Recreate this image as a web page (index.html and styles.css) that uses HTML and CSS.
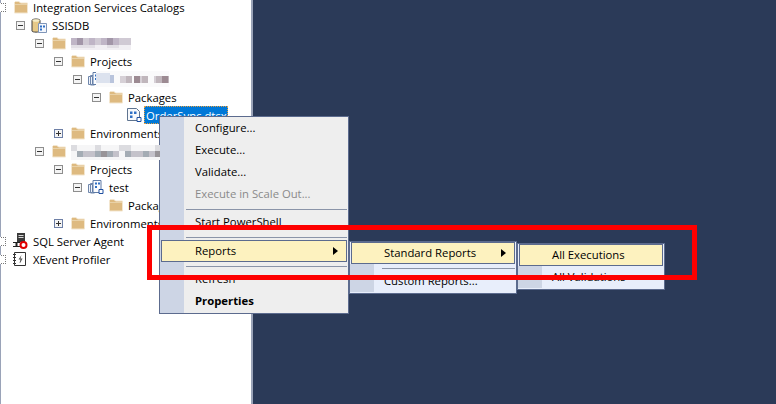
FILE: index.html
```html
<!DOCTYPE html>
<html lang="en">
<head>
<meta charset="utf-8">
<title>Object Explorer</title>
<link rel="stylesheet" href="styles.css">
</head>
<body>
<svg class="defs" width="0" height="0" aria-hidden="true">
  <defs>
    <symbol id="folder" viewBox="0 0 16 16">
      <path d="M2.500 14V3.500L3.500 2.500h3.500l1.500 1.500h7v10z" fill="#deba80" stroke="#f3e6cf"/>
      <path d="M3 5.500h12" stroke="#e9d2a8"/>
    </symbol>
    <symbol id="db" viewBox="0 0 16 16">
      <path d="M1 3.500C1 1.500 9 1.500 9 3.500V14C9 15.500 1 15.500 1 14z" fill="#e6c988" stroke="#3f3f3f"/>
      <ellipse cx="5" cy="3.500" rx="3.500" ry="1.300" fill="#f6eec8"/>
      <path d="M7.500 6.500h8v9h-8z" fill="#f4f7fc" stroke="#7f95b8"/>
      <path d="M9 8.500h2v2H9zM12 8.500h2v2h-2zM9 11.500h2v2H9z" fill="#2f6fc4"/>
    </symbol>
    <symbol id="project" viewBox="0 0 16 16">
      <path d="M.5 5.500h4v8h-4zM2.500 4.500h4v9.500h-4z" fill="#eef2f9" stroke="#6f86ab"/>
      <path d="M5 1.500h8v12H5z" fill="#fbfcfe" stroke="#5f7ba6"/>
      <path d="M7 3.500h2v2H7zM10 3.500h2v2h-2zM7 7h2v2H7z" fill="#2f6fc4"/>
      <path d="M11 10.500h4v4h-4z" fill="#fff" stroke="#1f4fa0"/>
    </symbol>
    <symbol id="package" viewBox="0 0 16 16">
      <path d="M1.500 1.500h9l3 3v9h-12z" fill="#f7f9fc" stroke="#5f7490"/>
      <path d="M4 4.500h2.500V7H4zM8 4.500h2.500V7H8zM4 8.500h2.500V11H4z" fill="#2f6fc4"/>
      <path d="M11 10.500h4v4h-4z" fill="#fff" stroke="#1f4fa0"/>
    </symbol>
    <symbol id="agent" viewBox="0 0 16 16">
      <path d="M5 0h8v9H5z" fill="#3a3a3a"/>
      <path d="M6.500 2h5v1h-5zM6.500 4h5v1h-5z" fill="#d8d8d8"/>
      <path d="M1 9h7v1H5.500v3H8v1H1v-1h2.500v-3H1z" fill="#222"/>
      <circle cx="11.500" cy="12" r="3" fill="#fff" stroke="#e00000" stroke-width="2"/>
    </symbol>
    <symbol id="xevent" viewBox="0 0 16 16">
      <path d="M2.500 1.500h11v13h-11z" fill="#fff" stroke="#333"/>
      <path d="M1 3.500h3M1 6.500h3M1 9.500h3M1 12.500h3" stroke="#333"/>
      <path d="M9.500 4L6.500 8.500h2L7.500 12l1-.5 2-4H8.500z" fill="#555"/>
    </symbol>
    <symbol id="mosaic-a" viewBox="0 0 60 12">
      <path d="M0 0h60v12H0z" fill="#f1eff3"/>
      <g fill="#bfb5c6"><path d="M0 0h12v7H0zM18 0h6v7h-6zM30 0h18v7H30z"/></g>
      <g fill="#a296a8"><path d="M6 0h6v7H6zM36 0h6v7h-6z"/></g>
      <g fill="#d0cad4"><path d="M12 0h6v7h-6zM24 0h6v7h-6zM48 0h12v7H48z"/></g>
      <path d="M0 7h24v3H0zM36 7h12v3H36z" fill="#e2dfe5"/>
    </symbol>
    <symbol id="mosaic-b" viewBox="0 0 73 16">
      <path d="M0 0h73v16H0z" fill="#fafafb"/>
      <path d="M0 2h14v10H0z" fill="#dce2ee"/>
      <path d="M14 4h4v8h-4z" fill="#b9c4dc"/>
      <path d="M24 5h10v7H24zM40 5h6v7h-6zM58 5h8v7h-8z" fill="#d6d0d6"/>
      <path d="M30 5h6v7h-6zM46 5h6v7h-6zM60 5h13v7H60z" fill="#c0b6bc"/>
      <path d="M38 5h6v7h-6zM66 5h6v7h-6z" fill="#9c8a92"/>
    </symbol>
    <symbol id="mosaic-c" viewBox="0 0 89 15">
      <path d="M0 0h89v15H0z" fill="#f6f6f7"/>
      <path d="M0 0h6v6H0zM24 0h6v6h-6zM48 0h12v6H48zM84 0h5v6h-5z" fill="#dcdce0"/>
      <path d="M6 6h6v6H6zM24 6h6v6h-6zM36 6h6v6h-6zM54 6h6v6h-6zM72 6h6v6h-6z" fill="#a4acb4"/>
      <path d="M12 6h12v6H12zM42 6h6v6h-6zM60 6h12v6H60zM78 6h11v6H78z" fill="#c4c2ca"/>
      <path d="M30 6h6v6h-6zM84 6h5v6h-5z" fill="#989498"/>
    </symbol>
  </defs>
</svg>

<main class="workspace">
  <aside class="explorer">
    <ul class="tree">
      <li class="node lv0"><i class="exp exp-cut"></i><svg class="ico"><use href="#folder"/></svg><span>Integration Services Catalogs</span></li>
      <li class="node lv1"><i class="exp minus"></i><svg class="ico"><use href="#db"/></svg><span>SSISDB</span></li>
      <li class="node lv2"><i class="exp minus"></i><svg class="ico"><use href="#folder"/></svg><svg class="mosaic m-a"><use href="#mosaic-a"/></svg></li>
      <li class="node lv3"><i class="exp minus"></i><svg class="ico"><use href="#folder"/></svg><span>Projects</span></li>
      <li class="node lv4"><i class="exp minus"></i><svg class="ico"><use href="#project"/></svg><svg class="mosaic m-b"><use href="#mosaic-b"/></svg></li>
      <li class="node lv5"><i class="exp minus"></i><svg class="ico"><use href="#folder"/></svg><span>Packages</span></li>
      <li class="node lv6"><i class="exp none"></i><svg class="ico"><use href="#package"/></svg><span class="selected">OrderSync.dtsx</span></li>
      <li class="node lv3"><i class="exp plus"></i><svg class="ico"><use href="#folder"/></svg><span>Environments</span></li>
      <li class="node lv2"><i class="exp minus"></i><svg class="ico"><use href="#folder"/></svg><svg class="mosaic m-c"><use href="#mosaic-c"/></svg></li>
      <li class="node lv3"><i class="exp minus"></i><svg class="ico"><use href="#folder"/></svg><span>Projects</span></li>
      <li class="node lv4"><i class="exp minus"></i><svg class="ico"><use href="#project"/></svg><span>test</span></li>
      <li class="node lv5"><i class="exp none"></i><svg class="ico"><use href="#folder"/></svg><span>Packages</span></li>
      <li class="node lv3"><i class="exp plus"></i><svg class="ico"><use href="#folder"/></svg><span>Environments</span></li>
      <li class="node lv0"><i class="exp exp-cut"></i><svg class="ico"><use href="#agent"/></svg><span>SQL Server Agent</span></li>
      <li class="node lv0"><i class="exp exp-cut"></i><svg class="ico"><use href="#xevent"/></svg><span>XEvent Profiler</span></li>
    </ul>
  </aside>
  <div class="canvas"></div>
</main>

<nav class="menu menu-main">
  <div class="item">Configure...</div>
  <div class="item">Execute...</div>
  <div class="item">Validate...</div>
  <div class="item disabled">Execute in Scale Out...</div>
  <div class="sep"></div>
  <div class="item">Start PowerShell</div>
  <div class="sep sep-tall"></div>
  <div class="item active">Reports<b class="arrow"></b></div>
  <div class="sep"></div>
  <div class="item">Refresh</div>
  <div class="item strong">Properties</div>
</nav>

<nav class="menu menu-sub menu-reports">
  <div class="item active">Standard Reports<b class="arrow"></b></div>
  <div class="sep"></div>
  <div class="item">Custom Reports...</div>
</nav>

<nav class="menu menu-sub menu-standard">
  <div class="item active">All Executions</div>
  <div class="item">All Validations</div>
</nav>

<div class="callout"></div>
</body>
</html>
```
FILE: styles.css
```css
* { box-sizing: border-box; }
html, body { margin: 0; height: 100%; overflow: hidden; }
body {
  font: 11.3px/18px "Open Sans", "Noto Sans", sans-serif;
  color: #000;
  background: #2b3a58;
  position: relative;
}
.defs { position: absolute; }
.workspace { display: flex; height: 404px; }
.explorer {
  width: 253px;
  flex: none;
  background: #fff;
  border-left: 1px solid #9aa3b8;
  border-right: 2px solid #9aa3b8;
  overflow: visible;
}
.canvas { flex: 1; background: #2b3a58; }

.tree { list-style: none; margin: -2px 0 0 -1px; padding: 0; }
.node { display: flex; align-items: center; height: 18px; white-space: nowrap; }
.node span { margin-top: 2px; }
.lv0 { padding-left: 0; margin-left: -3px; }
.lv1 { padding-left: 16px; }
.lv2 { padding-left: 35px; }
.lv3 { padding-left: 54px; }
.lv4 { padding-left: 73px; }
.lv5 { padding-left: 92px; }
.lv6 { padding-left: 111px; }

.exp {
  width: 9px; height: 9px; flex: none;
  border: 1px solid #8e8e8e;
  background: #f4f4f4;
  position: relative;
  margin-right: 6px;
}
.exp.none { border: 0; background: none; }
.minus::after, .plus::after {
  content: ""; position: absolute; left: 1px; top: 3px; width: 5px; height: 1px; background: #333;
}
.plus { border-color: #6d7fa6; }
.plus::before {
  content: ""; position: absolute; left: 3px; top: 1px; width: 1px; height: 5px; background: #333;
}
.exp-cut { border: 1px dotted #777; background: #fff; }
.ico { width: 16px; height: 16px; flex: none; margin-right: 5px; }
.node .selected {
  background: #0078d7;
  color: #fff;
  outline: 1px dotted #e8a040;
  outline-offset: -1px;
  padding: 0 1px 0 2px;
  margin: 0 0 0 -3px;
  height: 18px;
  line-height: 19px;
}
.mosaic { flex: none; position: relative; z-index: 2; }
.m-a { width: 60px; height: 12px; margin-top: 2px; }
.m-b { width: 73px; height: 16px; margin-left: -13px; }
.m-c { width: 89px; height: 15px; margin-top: 2px; }

.menu {
  position: absolute;
  z-index: 1;
  border: 1px solid #5c6b8e;
  background: #eee;
}
.menu::before {
  content: "";
  position: absolute; left: 0;
  width: 24px;
  background: #cdd5e5;
}
.menu-sub { background: #e8eefb; }
.menu-reports { left: 349px; top: 241px; width: 168px; height: 53px; }
.menu-reports::before { top: 22px; height: 28px; }
.menu-reports .sep { margin-left: 32px; }
.menu-standard { left: 517px; top: 243px; width: 148px; height: 47px; }
.menu-standard::before { top: 22px; height: 22px; }
.menu-sub .item { position: relative; padding-left: 34px; }
.menu-sub .active { padding-left: 32px; }
.item { height: 22px; line-height: 22px; white-space: nowrap; }
.disabled { color: #8a8a8a; }
.strong { font-weight: 700; }
.active {
  margin: 0 1px;
  background: #fdf2bf;
  border: 1px solid #5c6b8e;
  line-height: 20px;
  position: relative;
}
.menu-main {
  left: 159px; top: 116px; width: 190px; height: 198px;
  background: linear-gradient(to right, #cdd5e5 24px, #eee 24px);
}
.menu-main .item { padding-left: 35px; }
.menu-main .active { padding-left: 33px; }
.menu-main .sep { margin-left: 26px; }
.sep { height: 6px; margin-right: 1px; position: relative; }
.sep::after { content: ""; position: absolute; left: 0; right: 0; top: 4px; height: 1px; background: #8a94a8; }
.sep-tall { height: 7px; }
.arrow {
  position: absolute; right: 8px; top: 6px;
  border-left: 5px solid #000;
  border-top: 4.500px solid transparent;
  border-bottom: 4.500px solid transparent;
}
.callout {
  position: absolute;
  z-index: 3;
  left: 147px; top: 225px; width: 550px; height: 55px;
  border: 5px solid #fe0000;
}
```
